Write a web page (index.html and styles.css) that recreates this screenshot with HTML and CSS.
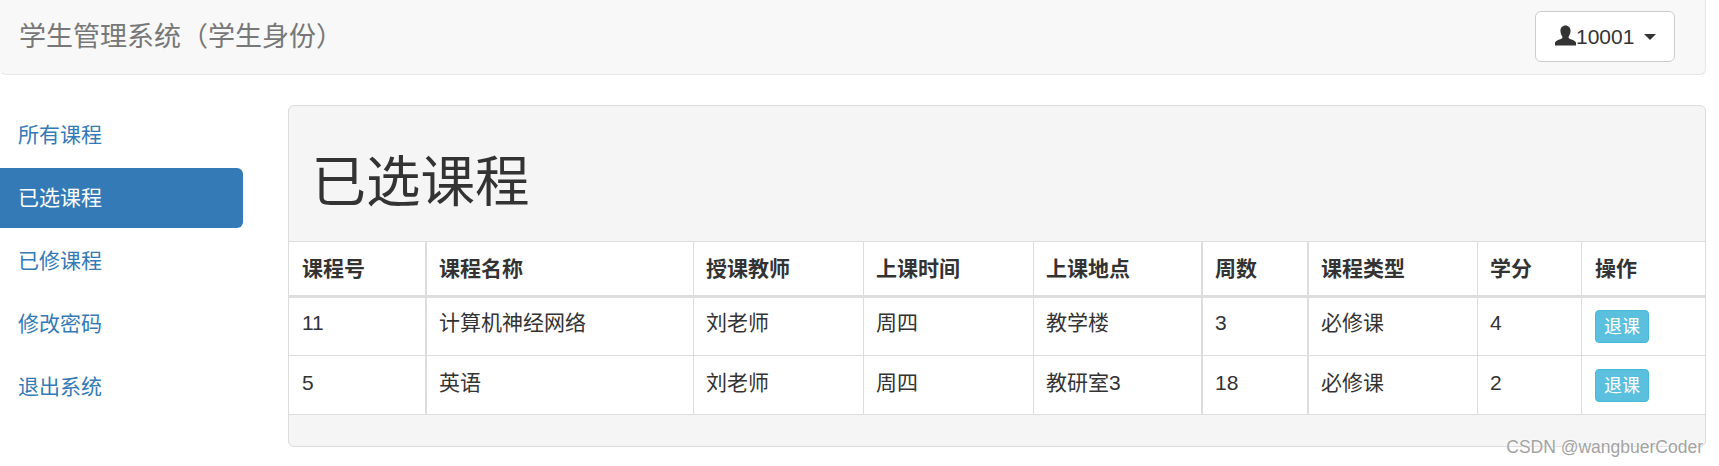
FILE: index.html
```html
<!DOCTYPE html>
<html lang="zh-CN">
<head>
<meta charset="utf-8">
<title>学生管理系统</title>
<link rel="stylesheet" href="styles.css">
</head>
<body>
<header class="navbar">
  <span class="brand">学生管理系统（学生身份）</span>
  <button class="user-btn" type="button">
    <svg class="user-icon" viewBox="0 0 22 21" aria-hidden="true"><path d="M11 0c3.300 0 5.300 2.400 5.300 5.600 0 2.300-.8 4.100-1.700 5.500-.5.800-.6 1.500-.2 2.100.5.700 1.500 1 3 1.600 2 .7 3.700 1.500 4.600 3V21H0v-3.200c.9-1.500 2.600-2.300 4.600-3 1.500-.6 2.500-.9 3-1.600.4-.6.300-1.300-.2-2.100-.9-1.400-1.700-3.200-1.700-5.500C5.700 2.400 7.700 0 11 0z"/></svg><span>10001</span><i class="caret"></i>
  </button>
</header>
<div class="layout">
  <nav class="sidenav">
    <a href="#">所有课程</a>
    <a href="#" class="active">已选课程</a>
    <a href="#">已修课程</a>
    <a href="#">修改密码</a>
    <a href="#">退出系统</a>
  </nav>
  <section class="panel">
    <div class="panel-head"><h1>已选课程</h1></div>
    <table class="courses">
      <colgroup>
        <col class="c1"><col class="c2"><col class="c3"><col class="c4"><col class="c5"><col class="c6"><col class="c7"><col class="c8"><col class="c9">
      </colgroup>
      <thead>
        <tr>
          <th class="thick">课程号</th><th>课程名称</th><th>授课教师</th><th>上课时间</th><th class="thick">上课地点</th><th class="thick">周数</th><th>课程类型</th><th>学分</th><th>操作</th>
        </tr>
      </thead>
      <tbody>
        <tr>
          <td class="thick">11</td><td>计算机神经网络</td><td>刘老师</td><td>周四</td><td class="thick">教学楼</td><td class="thick">3</td><td>必修课</td><td>4</td><td class="action"><button class="drop" type="button">退课</button></td>
        </tr>
        <tr class="last-row">
          <td class="thick">5</td><td>英语</td><td>刘老师</td><td>周四</td><td class="thick">教研室3</td><td class="thick">18</td><td>必修课</td><td>2</td><td class="action"><button class="drop" type="button">退课</button></td>
        </tr>
      </tbody>
    </table>
    <div class="panel-foot"></div>
  </section>
</div>
<div class="watermark">CSDN @wangbuerCoder</div>
</body>
</html>
```
FILE: styles.css
```css
* { box-sizing: border-box; }
html, body { margin: 0; height: 100%; }
body {
  position: relative;
  overflow: hidden;
  background: #fff;
  color: #333;
  font-family: "Liberation Sans", "Noto Sans CJK SC", sans-serif;
  font-size: 21px;
  line-height: 30px;
}
.navbar {
  display: flex;
  align-items: center;
  justify-content: space-between;
  width: 1706px;
  height: 75px;
  padding: 0 30px 1px 19px;
  background: #f8f8f8;
  border: 1px solid #e7e7e7;
  border-width: 0 1px 1px 0;
  border-radius: 0 0 6px 6px;
}
.brand { color: #777; font-size: 27px; line-height: 30px; }
.user-btn {
  display: flex;
  align-items: center;
  width: 140px;
  height: 51px;
  padding: 0 0 0 19px;
  background: #fff;
  border: 1px solid #ccc;
  border-radius: 6px;
  color: #333;
  font: inherit;
}
.user-icon { width: 21px; height: 21px; fill: #333; margin-top: -3px; flex: none; }
.caret {
  width: 0;
  height: 0;
  margin-left: 10px;
  border-top: 6px solid #333;
  border-left: 6px solid transparent;
  border-right: 6px solid transparent;
}
.layout {
  display: grid;
  grid-template-columns: 243px 1418px;
  column-gap: 45px;
  padding-top: 30px;
}
.sidenav { display: flex; flex-direction: column; gap: 3px; }
.sidenav a {
  display: block;
  height: 60px;
  padding: 15px 0 15px 18px;
  border-radius: 0 6px 6px 0;
  color: #337ab7;
  text-decoration: none;
}
.sidenav a.active { background: #337ab7; color: #fff; }
.panel {
  height: 342px;
  background: #f5f5f5;
  border: 1px solid #ddd;
  border-radius: 6px;
  overflow: hidden;
}
.panel-head { height: 136px; padding: 47px 22.500px 0; border-bottom: 1px solid #ddd; }
.panel-head h1 { margin: 0; font-size: 54.500px; font-weight: 400; line-height: 60px; }
.courses {
  width: 100%;
  table-layout: fixed;
  border-collapse: separate;
  border-spacing: 0;
  background: #fff;
}
.c1 { width: 138px; }
.c2 { width: 267px; }
.c3, .c4 { width: 170px; }
.c5 { width: 169px; }
.c6 { width: 106px; }
.c7 { width: 169px; }
.c8 { width: 104px; }
.courses th, .courses td {
  padding: 12px 12px;
  text-align: left;
  vertical-align: top;
  border-right: 1px solid #ddd;
  border-bottom: 1px solid #ddd;
}
.courses th { border-bottom-width: 3px; height: 56px; padding-bottom: 11px; }
.courses td { height: 58px; padding-top: 10px; }
.courses td.action { padding-top: 12px; }
.courses .last-row td { height: 59px; padding-top: 12px; }
.courses .last-row td.action { padding-top: 13px; }
.courses th:first-child, .courses td:first-child { padding-left: 13px; }
.courses th:last-child, .courses td:last-child { border-right: 0; padding-left: 13px; }
.courses .thick { border-right-width: 2px; }
.drop {
  display: block;
  width: 54px;
  height: 33px;
  padding: 0;
  background: #5bc0de;
  border: 1px solid #46b8da;
  border-radius: 4px;
  color: #fff;
  font: 18px/30px "Liberation Sans", "Noto Sans CJK SC", sans-serif;
}
.panel-foot { height: 31px; }
.watermark {
  position: absolute;
  right: 16px;
  top: 435px;
  color: #a3a3a3;
  font-size: 17.500px;
  line-height: 24px;
  text-shadow: 0 0 2px #fff, 0 0 2px #fff;
}
```
